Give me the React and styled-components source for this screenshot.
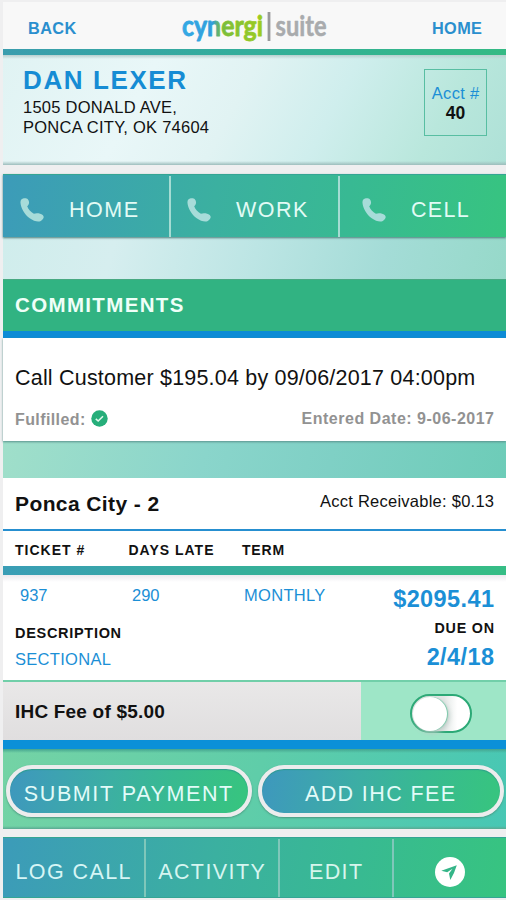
import React from "react";
import styled, { createGlobalStyle } from "styled-components";

const brand = "linear-gradient(100deg, #3c9bb9 0%, #3bb0a0 42%, #38b993 68%, #37c480 100%)";
const blue = "#1b8fd6";

const GlobalStyle = createGlobalStyle`
  * { box-sizing: border-box; }
  body {
    margin: 0;
    background: #efeff0;
    font-family: "Liberation Sans", Arial, sans-serif;
    color: #111;
  }
`;

const Screen = styled.main`
  width: 506px;
  height: 900px;
  padding: 2px 0 2px 3px;
  display: flex;
  flex-direction: column;
  overflow: hidden;
`;

const Text = styled.span`
  display: block;
  white-space: nowrap;
  font-size: ${(p) => p.$size}px;
  line-height: ${(p) => p.$line || 20}px;
  font-weight: ${(p) => (p.$bold ? 700 : 400)};
  letter-spacing: ${(p) => p.$track || 0}px;
  color: ${(p) => p.$color || "#111"};
  margin-right: ${(p) => -(p.$track || 0)}px;
`;

const TopBar = styled.header`
  flex: none;
  height: 53px;
  padding: 4px 24px 6px 25px;
  display: flex;
  align-items: center;
  justify-content: space-between;
  background: linear-gradient(90deg, #3a9dae, #34ad9c 45%, #34ba84) bottom / 100% 6px no-repeat, #f8f8f8;
`;

const Logo = styled.svg`
  width: 150px;
  height: 40px;
  margin-bottom: 4px;
  overflow: visible;
`;

const Customer = styled.section`
  flex: none;
  height: 110px;
  padding: 12px 19px 0 20px;
  display: flex;
  justify-content: space-between;
  align-items: flex-start;
  background:
    linear-gradient(#b9cfcf, #b9cfcf00) top / 100% 4px no-repeat,
    linear-gradient(#9dbdbc00, #9dbdbc) bottom / 100% 4px no-repeat,
    linear-gradient(118deg, #e0f3f3 0%, #e9f7f8 28%, #e1f3f3 46%, #cfeeed 64%, #b9e7dc 84%, #aee1d7 100%);
`;

const Address = styled.div`
  display: grid;
  grid-template-rows: 30px 20px 19px;
`;

const Account = styled.div`
  width: 63px;
  height: 67px;
  margin-top: 2px;
  border: 1px solid #58bea2;
  display: flex;
  flex-direction: column;
  align-items: center;
  justify-content: center;
  padding-top: 1px;
`;

const PhoneBar = styled.nav`
  flex: none;
  margin-top: 9px;
  height: 63px;
  display: grid;
  grid-template-columns: 166px 169px 1fr;
  background: ${brand};
  border-top: 1px solid #35a594;
  box-shadow: 0 1px 2px #4e7f7c;
  z-index: 1;
`;

const PhoneButton = styled.a`
  display: flex;
  align-items: center;
  padding: 6px 0 0 ${(p) => p.$inset}px;
  gap: 25px;
  border-left: ${(p) => (p.$first ? 0 : 2)}px solid #a5dcd3;
  margin-top: 1px;
`;

const PhoneIcon = styled.svg`
  width: 24px;
  height: 24px;
  fill: #a7dcd9;
`;

const Gap = styled.div`
  flex: none;
  height: ${(p) => p.$height}px;
  background: ${(p) => p.$fill};
`;

const Heading = styled.h2`
  flex: none;
  margin: 0;
  height: 59px;
  padding: 15px 12px 0;
  background: #31b382;
  border-top: 1px solid #48a982;
  border-bottom: 7px solid #0d8bd6;
`;

const Card = styled.section`
  flex: none;
  height: 103px;
  padding: 30px 12px 0;
  background: #fff;
  box-shadow: 0 1px 2px #5a918d;
  z-index: 1;
`;

const Spread = styled.div`
  display: flex;
  align-items: flex-start;
  justify-content: space-between;
  margin-top: ${(p) => p.$top || 0}px;
`;

const Status = styled.div`
  display: flex;
  align-items: center;
  gap: 6px;
`;

const CheckIcon = styled.svg`
  width: 17px;
  height: 17px;
  margin-top: -3px;
`;

const StoreRow = styled.div`
  flex: none;
  height: 53px;
  padding: 13px 12px 0;
  display: flex;
  justify-content: space-between;
  background: #fff;
  border-bottom: 2px solid #268fd0;
`;

const TableHead = styled.div`
  flex: none;
  height: 44px;
  padding: 9px 12px 0;
  display: grid;
  grid-template-columns: 113.5px 113.5px 1fr;
  background: linear-gradient(90deg, #3a9db6, #36ae9c 45%, #36bd85) bottom / 100% 9px no-repeat, #fff;
`;

const Ticket = styled.section`
  flex: none;
  height: 107px;
  padding: 0 12px;
  display: flex;
  justify-content: space-between;
  background: linear-gradient(#ece9ee, #fff 7px);
  border-bottom: 2px solid #71cfa9;
`;

const TicketInfo = styled.div`
  width: 330px;
  padding-top: 10px;
`;

const TicketValues = styled.div`
  display: grid;
  grid-template-columns: 112px 112px 1fr;
  padding-left: 5px;
  margin-bottom: 18px;
`;

const Amounts = styled.div`
  display: grid;
  grid-template-rows: 29px 29px 29px;
  justify-items: end;
  padding-top: 14px;
`;

const FeeRow = styled.div`
  flex: none;
  height: 67px;
  display: grid;
  grid-template-columns: 358px 1fr;
  border-bottom: 9px solid #0b90d8;
`;

const FeeLabel = styled.div`
  padding: 20px 12px 0;
  background: linear-gradient(#e9e8e8, #e0dedf);
`;

const FeeSwitch = styled.div`
  display: flex;
  justify-content: center;
  padding: 12px 0 0 14px;
  background: #9ee6c7;
`;

const Toggle = styled.button`
  width: 62px;
  height: 39px;
  padding: 1px;
  border: 2px solid #2ba976;
  border-radius: 20px;
  background: linear-gradient(90deg, #e2e7e5 55%, #fff 78%);
`;

const Knob = styled.i`
  display: block;
  width: 34px;
  height: 34px;
  border-radius: 50%;
  background: #fff;
  box-shadow: 1px 0 1px #79c9a9, 2px 2px 5px #bbc9c5;
`;

const Actions = styled.div`
  flex: none;
  height: 80px;
  padding: 16px 2px 0 3px;
  display: grid;
  grid-template-columns: 246px 246px;
  gap: 6px;
  background:
    linear-gradient(#45a58f, #45a58f00) top / 100% 4px no-repeat,
    linear-gradient(#5aa99200, #5aa992) bottom / 100% 3px no-repeat,
    linear-gradient(105deg, #74d3a5, #5fcda9 50%, #47c7b4);
`;

const Pill = styled.button`
  height: 52px;
  padding: 5px 2px 0 0;
  display: flex;
  align-items: center;
  justify-content: center;
  border: 4px solid #ececed;
  border-radius: 26px;
  background: linear-gradient(100deg, #3e98bd 3%, #3cafa3 42%, #38ba91 66%, #37c480 95%) border-box;
  box-shadow: 0 1px 2px #4b967e, inset 0 1px 1px #2d9d8c;
  font-family: inherit;
`;

const Footer = styled.nav`
  flex: none;
  margin-top: 8px;
  height: 61px;
  display: grid;
  grid-template-columns: 141px 134px 114px 1fr;
  background: ${brand};
  box-shadow: inset 0 1px #35a594, inset 0 -1px #35a594;
`;

const FooterItem = styled.a`
  display: flex;
  align-items: center;
  justify-content: center;
  margin: 2px 0 1px;
  padding: 8px 1px 0 0;
  border-left: ${(p) => (p.$first ? 0 : 2)}px solid #7fc7ba;
`;

const LocateIcon = styled.svg`
  width: 30px;
  height: 30px;
`;

function CynergiLogo() {
  return (
    <Logo viewBox="0 0 150 40" role="img" aria-label="cynergi suite">
      <defs>
        <linearGradient id="logo-ink" gradientUnits="userSpaceOnUse" x1="4" y1="0" x2="84" y2="0">
          <stop offset="0" stopColor="#35a9e4" />
          <stop offset="0.37" stopColor="#309edb" />
          <stop offset="0.47" stopColor="#79bd3d" />
          <stop offset="1" stopColor="#9dcc20" />
        </linearGradient>
      </defs>
      <text x="3" y="30" fontFamily="Lato, sans-serif" fontWeight="700" fontSize="28" fill="url(#logo-ink)" stroke="url(#logo-ink)" strokeWidth="0.8" strokeLinejoin="round" textLength="81" lengthAdjust="spacingAndGlyphs">cynergi</text>
      <rect x="88.6" y="6" width="2.8" height="29" fill="#98999b" />
      <text x="96.5" y="30" fontFamily="Lato, sans-serif" fontWeight="700" fontSize="28" fill="#a9abad" stroke="#a9abad" strokeWidth="0.5" strokeLinejoin="round" textLength="51" lengthAdjust="spacingAndGlyphs">suite</text>
    </Logo>
  );
}

function Phone({ label, inset, track, first }) {
  return (
    <PhoneButton $inset={inset} $first={first}>
      <PhoneIcon viewBox="0 0 24 24">
        <path d="M1.3 1.6C3 0 6.4-.2 7.8 1.3C9.8 3.4 9.3 6.6 7.2 8.3C8.2 11.3 10.8 14 13.9 15.8C16.3 14.8 20.5 15.2 22.7 17C24.6 18.7 23.6 21.2 20.8 23C18.2 24.4 13.5 23.1 9.7 20.3C4.3 16.2 1 10.2.5 5C.4 3.7.5 2.4 1.3 1.6Z" />
      </PhoneIcon>
      <Text $size={21.5} $track={track} $color="#e2fbf5">{label}</Text>
    </PhoneButton>
  );
}

export default function App() {
  return (
    <>
      <GlobalStyle />
      <Screen>
        <TopBar>
          <Text $size={16.3} $bold $track={0.4} $color="#2a8fce">BACK</Text>
          <CynergiLogo />
          <Text $size={16.3} $bold $track={0.4} $color="#2a8fce">HOME</Text>
        </TopBar>
        <Customer>
          <Address>
            <Text $size={26} $line={27} $bold $track={1.6} $color="#168cd4">DAN LEXER</Text>
            <Text $size={16.5} $track={0.25}>1505 DONALD AVE,</Text>
            <Text $size={16.5} $track={0.25}>PONCA CITY, OK 74604</Text>
          </Address>
          <Account>
            <Text $size={16.5} $track={0.3} $color={blue}>Acct #</Text>
            <Text $size={17.5} $bold>40</Text>
          </Account>
        </Customer>
        <PhoneBar>
          <Phone first label="HOME" inset={17} track={1.5} />
          <Phone label="WORK" inset={16} track={1.5} />
          <Phone label="CELL" inset={22} track={1.3} />
        </PhoneBar>
        <Gap $height={42} $fill="linear-gradient(105deg, #d0edec, #d6eeef 22%, #bce5e4 50%, #a4dcd7 75%, #96d9c9)" />
        <Heading>
          <Text $size={20.5} $bold $track={1.35} $color="#effff8">COMMITMENTS</Text>
        </Heading>
        <Card>
          <Text $size={21.5} $track={0.2}>Call Customer $195.04 by 09/06/2017 04:00pm</Text>
          <Spread $top={21}>
            <Status>
              <Text $size={16} $bold $track={0.4} $color="#929292" $line={22}>Fulfilled:</Text>
              <CheckIcon viewBox="0 0 17 17">
                <circle cx="8.5" cy="8.5" r="8.2" fill="#26ae7a" />
                <path d="M4.8 8.8L7.2 11L12 6.2" fill="none" stroke="#dff8ec" strokeWidth="1.6" />
              </CheckIcon>
            </Status>
            <Text $size={16} $bold $track={0.5} $color="#929292">Entered Date: 9-06-2017</Text>
          </Spread>
        </Card>
        <Gap $height={37} $fill="linear-gradient(105deg, #a0dfca, #8ad5cb 40%, #7fd0c5 65%, #6dccb8)" />
        <StoreRow>
          <Text $size={21} $bold $line={25} $track={0.4}>Ponca City - 2</Text>
          <Text $size={16.5} $track={0.25}>Acct Receivable: $0.13</Text>
        </StoreRow>
        <TableHead>
          <Text $size={14} $bold $track={1}>TICKET #</Text>
          <Text $size={14} $bold $track={1}>DAYS LATE</Text>
          <Text $size={14} $bold $track={0.8}>TERM</Text>
        </TableHead>
        <Ticket>
          <TicketInfo>
            <TicketValues>
              <Text $size={16.5} $color={blue}>937</Text>
              <Text $size={16.5} $color={blue}>290</Text>
              <Text $size={16.5} $track={0.3} $color={blue}>MONTHLY</Text>
            </TicketValues>
            <Text $size={14.5} $line={21} $bold $track={0.7}>DESCRIPTION</Text>
            <Text $size={16.5} $line={30} $track={0.3} $color={blue}>SECTIONAL</Text>
          </TicketInfo>
          <Amounts>
            <Text $size={23.5} $bold $track={0.4} $color={blue}>$2095.41</Text>
            <Text $size={14.3} $bold $track={0.8}>DUE ON</Text>
            <Text $size={23.5} $bold $track={0.4} $color={blue}>2/4/18</Text>
          </Amounts>
        </Ticket>
        <FeeRow>
          <FeeLabel>
            <Text $size={19} $bold $track={0.2}>IHC Fee of $5.00</Text>
          </FeeLabel>
          <FeeSwitch>
            <Toggle aria-label="IHC Fee"><Knob /></Toggle>
          </FeeSwitch>
        </FeeRow>
        <Actions>
          <Pill><Text $size={21.5} $track={1.6} $color="#e2fbf8">SUBMIT PAYMENT</Text></Pill>
          <Pill><Text $size={21.5} $track={1.4} $color="#e2fbf8">ADD IHC FEE</Text></Pill>
        </Actions>
        <Footer>
          <FooterItem $first><Text $size={21.5} $track={1.4} $color="#d6f5f5">LOG CALL</Text></FooterItem>
          <FooterItem><Text $size={21.5} $track={1.4} $color="#d6f5f0">ACTIVITY</Text></FooterItem>
          <FooterItem><Text $size={21.5} $track={1.4} $color="#d6f5ec">EDIT</Text></FooterItem>
          <FooterItem>
            <LocateIcon viewBox="0 0 30 30">
              <circle cx="15" cy="15" r="15" fill="#fff" />
              <path d="M21.8 8.2L6.3 13.8L12.2 15.3L17.5 11.8L14 16.4L15.3 23Q19.5 16 21.8 8.2Z" fill="#35b588" />
            </LocateIcon>
          </FooterItem>
        </Footer>
      </Screen>
    </>
  );
}
